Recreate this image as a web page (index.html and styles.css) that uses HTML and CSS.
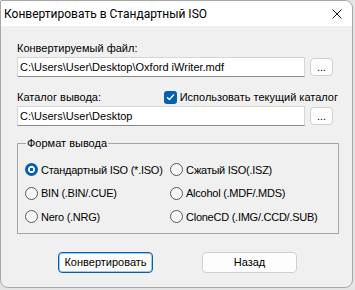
FILE: index.html
```html
<!DOCTYPE html>
<html lang="ru">
<head>
<meta charset="utf-8">
<link rel="stylesheet" href="styles.css">
</head>
<body>
<div class="window">
  <div class="titlebar">
    <span class="title">Конвертировать в Стандартный ISO</span>
    <svg class="close" width="10" height="10" viewBox="0 0 10 10"><path d="M0.5 0.5L9.5 9.5M9.5 0.5L0.5 9.5" stroke="#1a1a1a" stroke-width="1"/></svg>
  </div>
  <div class="content">
    <div class="label">Конвертируемый файл:</div>
    <div class="field-row">
      <div class="input">C:\Users\User\Desktop\Oxford iWriter.mdf</div>
      <div class="browse">...</div>
    </div>
    <div class="label-row">
      <span class="label">Каталог вывода:</span>
      <span class="check">
        <span class="checkbox"><svg width="9" height="8" viewBox="0 0 9 8"><path d="M1 4.2L3.4 6.5L8 1.5" stroke="#fff" stroke-width="1.3" fill="none"/></svg></span>
        <span>Использовать текущий каталог</span>
      </span>
    </div>
    <div class="field-row second">
      <div class="input">C:\Users\User\Desktop</div>
      <div class="browse">...</div>
    </div>
    <fieldset class="group">
      <legend>Формат вывода</legend>
      <div class="options">
        <div class="opt"><span class="radio on"></span><span>Стандартный ISO (*.ISO)</span></div>
        <div class="opt"><span class="radio"></span><span>Сжатый ISO(.ISZ)</span></div>
        <div class="opt"><span class="radio"></span><span>BIN (.BIN/.CUE)</span></div>
        <div class="opt"><span class="radio"></span><span>Alcohol (.MDF/.MDS)</span></div>
        <div class="opt"><span class="radio"></span><span>Nero (.NRG)</span></div>
        <div class="opt"><span class="radio"></span><span>CloneCD (.IMG/.CCD/.SUB)</span></div>
      </div>
    </fieldset>
    <div class="buttons">
      <div class="btn default">Конвертировать</div>
      <div class="btn">Назад</div>
    </div>
  </div>
</div>
</body>
</html>
```

FILE: styles.css
```css
html, body {
  margin: 0;
  padding: 0;
}
body {
  width: 355px;
  height: 290px;
  background: #e4e4e4;
  overflow: hidden;
}
.window {
  width: 353px;
  height: 288px;
  box-sizing: border-box;
  border: 1px solid #a8a8a8;
  border-radius: 2px 8px 8px 8px;
  background: #f0f0f0;
  overflow: hidden;
  display: flex;
  flex-direction: column;
}
.titlebar {
  height: 25px;
  flex: none;
  background: #ffffff;
  display: flex;
  align-items: center;
  justify-content: space-between;
  padding: 0 10px 0 3px;
}
.title {
  font-family: Roboto, "Liberation Sans", sans-serif;
  font-size: 12px;
  color: #000;
}
.close {
  display: block;
}
.content {
  flex: 1;
  padding: 16px 19px 0 16px;
  font-family: "Liberation Sans", Arial, sans-serif;
  font-size: 11px;
  color: #000;
}
.label {
  display: block;
  height: 13px;
  line-height: 13px;
}
.field-row {
  display: flex;
  align-items: center;
  margin-top: 2px;
}
.input {
  width: 288px;
  height: 20px;
  box-sizing: border-box;
  background: #fff;
  border: 1px solid #d6d6d6;
  border-bottom-color: #8b8b8b;
  line-height: 18px;
  padding-left: 2px;
  white-space: nowrap;
  overflow: hidden;
}
.browse {
  width: 23px;
  height: 18px;
  box-sizing: border-box;
  margin-left: 5px;
  border: 1px solid #d0d0d0;
  border-radius: 4px;
  background: #fdfdfd;
  text-align: center;
  line-height: 16px;
}
.label-row {
  display: flex;
  align-items: center;
  justify-content: space-between;
  height: 14px;
  margin-top: 13px;
}
.check {
  display: flex;
  align-items: center;
  gap: 3px;
  margin-right: -5px;
}
.checkbox {
  width: 13px;
  height: 13px;
  box-sizing: border-box;
  border-radius: 3px;
  background: #005fb8;
  display: flex;
  align-items: center;
  justify-content: center;
}
.checkbox svg {
  display: block;
}
.field-row.second {
  margin-top: 2px;
}
.group {
  margin: 11px 0 0 0;
  width: 322px;
  height: 97px;
  box-sizing: border-box;
  border: 1px solid #a6a6a6;
  padding: 8px 0 0 7px;
}
.group legend {
  padding: 0 1px;
  margin-left: 1px;
  line-height: 13px;
}
.options {
  display: grid;
  grid-template-columns: 145px 1fr;
  grid-auto-rows: 23.5px;
  align-items: center;
  letter-spacing: -0.25px;
}
.opt {
  display: flex;
  align-items: center;
  gap: 3px;
}
.radio {
  width: 13px;
  height: 13px;
  box-sizing: border-box;
  border-radius: 50%;
  border: 1px solid #5a5a5a;
  background: #f6f6f6;
  flex: none;
}
.radio.on {
  border: none;
  background: radial-gradient(circle, #005fb8 0 1.5px, #ffffff 2px 3.3px, #005fb8 3.8px);
}
.buttons {
  display: flex;
  gap: 49px;
  margin-top: 18px;
  padding-left: 41px;
}
.btn {
  width: 95px;
  height: 21px;
  box-sizing: border-box;
  border: 1px solid #d0d0d0;
  border-radius: 4px;
  background: #fdfdfd;
  text-align: center;
  line-height: 19px;
}
.btn.default {
  border: 1px solid #005fb8;
  box-shadow: inset 0 0 0 1px rgba(0, 95, 184, 0.35);
}
```
